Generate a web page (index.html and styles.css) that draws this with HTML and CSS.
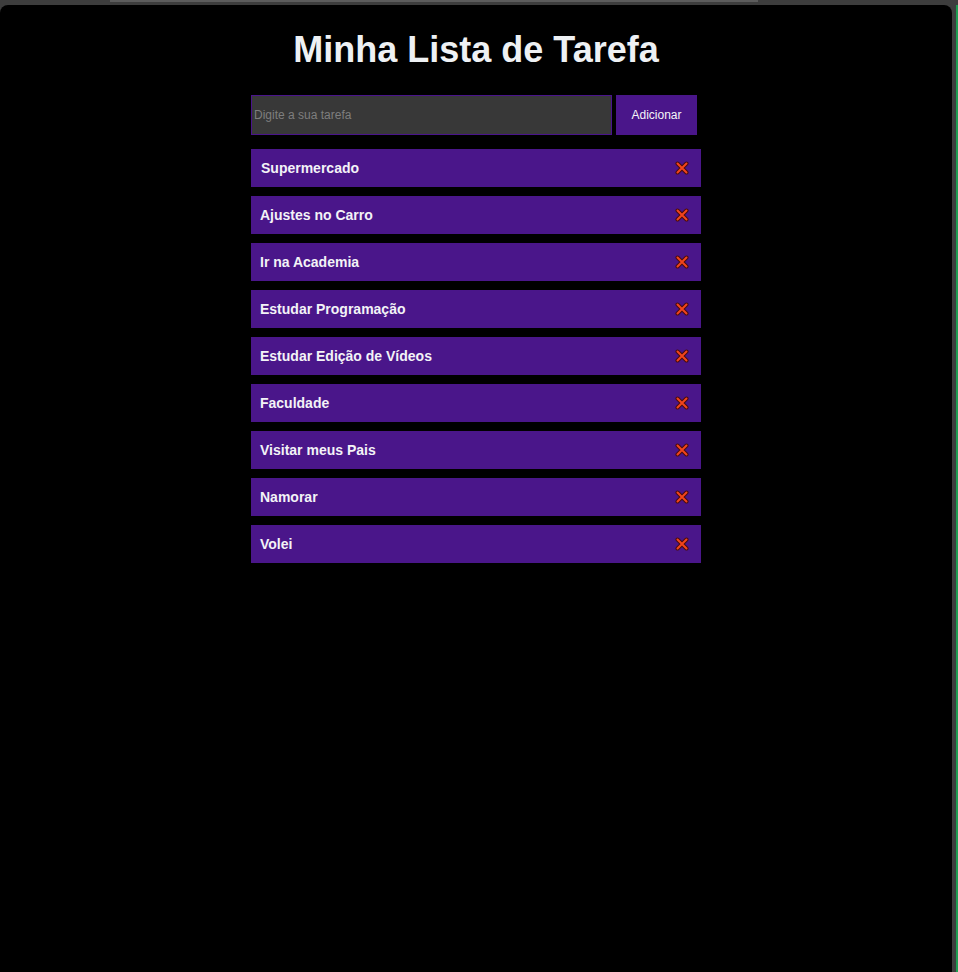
FILE: index.html
```html
<!DOCTYPE html>
<html lang="pt-BR">
<head>
<meta charset="utf-8">
<title>Minha Lista de Tarefa</title>
<link rel="stylesheet" href="styles.css">
</head>
<body>
<div class="chrome"><div class="chrome-bar"></div></div>
<div class="window">
  <main class="panel">
    <h1 class="title">Minha Lista de Tarefa</h1>
    <div class="todo">
      <form class="add-form">
        <input class="task-input" type="text" placeholder="Digite a sua tarefa">
        <button class="add-btn" type="button">Adicionar</button>
      </form>
      <ul class="task-list">
        <li class="task"><span class="task-name">Supermercado</span><span class="del"><svg viewBox="0 0 14 14" width="14" height="14"><path d="M2.5 2.5L11.5 11.5M11.5 2.5L2.5 11.5" stroke="#4a0c0c" stroke-width="4" stroke-linecap="round"/><path d="M2.5 2.5L11.5 11.5M11.5 2.5L2.5 11.5" stroke="#f2451c" stroke-width="2" stroke-linecap="round"/></svg></span></li>
        <li class="task"><span class="task-name">Ajustes no Carro</span><span class="del"><svg viewBox="0 0 14 14" width="14" height="14"><path d="M2.5 2.5L11.5 11.5M11.5 2.5L2.5 11.5" stroke="#4a0c0c" stroke-width="4" stroke-linecap="round"/><path d="M2.5 2.5L11.5 11.5M11.5 2.5L2.5 11.5" stroke="#f2451c" stroke-width="2" stroke-linecap="round"/></svg></span></li>
        <li class="task"><span class="task-name">Ir na Academia</span><span class="del"><svg viewBox="0 0 14 14" width="14" height="14"><path d="M2.5 2.5L11.5 11.5M11.5 2.5L2.5 11.5" stroke="#4a0c0c" stroke-width="4" stroke-linecap="round"/><path d="M2.5 2.5L11.5 11.5M11.5 2.5L2.5 11.5" stroke="#f2451c" stroke-width="2" stroke-linecap="round"/></svg></span></li>
        <li class="task"><span class="task-name">Estudar Programação</span><span class="del"><svg viewBox="0 0 14 14" width="14" height="14"><path d="M2.5 2.5L11.5 11.5M11.5 2.5L2.5 11.5" stroke="#4a0c0c" stroke-width="4" stroke-linecap="round"/><path d="M2.5 2.5L11.5 11.5M11.5 2.5L2.5 11.5" stroke="#f2451c" stroke-width="2" stroke-linecap="round"/></svg></span></li>
        <li class="task"><span class="task-name">Estudar Edição de Vídeos</span><span class="del"><svg viewBox="0 0 14 14" width="14" height="14"><path d="M2.5 2.5L11.5 11.5M11.5 2.5L2.5 11.5" stroke="#4a0c0c" stroke-width="4" stroke-linecap="round"/><path d="M2.5 2.5L11.5 11.5M11.5 2.5L2.5 11.5" stroke="#f2451c" stroke-width="2" stroke-linecap="round"/></svg></span></li>
        <li class="task"><span class="task-name">Faculdade</span><span class="del"><svg viewBox="0 0 14 14" width="14" height="14"><path d="M2.5 2.5L11.5 11.5M11.5 2.5L2.5 11.5" stroke="#4a0c0c" stroke-width="4" stroke-linecap="round"/><path d="M2.5 2.5L11.5 11.5M11.5 2.5L2.5 11.5" stroke="#f2451c" stroke-width="2" stroke-linecap="round"/></svg></span></li>
        <li class="task"><span class="task-name">Visitar meus Pais</span><span class="del"><svg viewBox="0 0 14 14" width="14" height="14"><path d="M2.5 2.5L11.5 11.5M11.5 2.5L2.5 11.5" stroke="#4a0c0c" stroke-width="4" stroke-linecap="round"/><path d="M2.5 2.5L11.5 11.5M11.5 2.5L2.5 11.5" stroke="#f2451c" stroke-width="2" stroke-linecap="round"/></svg></span></li>
        <li class="task"><span class="task-name">Namorar</span><span class="del"><svg viewBox="0 0 14 14" width="14" height="14"><path d="M2.5 2.5L11.5 11.5M11.5 2.5L2.5 11.5" stroke="#4a0c0c" stroke-width="4" stroke-linecap="round"/><path d="M2.5 2.5L11.5 11.5M11.5 2.5L2.5 11.5" stroke="#f2451c" stroke-width="2" stroke-linecap="round"/></svg></span></li>
        <li class="task"><span class="task-name">Volei</span><span class="del"><svg viewBox="0 0 14 14" width="14" height="14"><path d="M2.5 2.5L11.5 11.5M11.5 2.5L2.5 11.5" stroke="#4a0c0c" stroke-width="4" stroke-linecap="round"/><path d="M2.5 2.5L11.5 11.5M11.5 2.5L2.5 11.5" stroke="#f2451c" stroke-width="2" stroke-linecap="round"/></svg></span></li>
      </ul>
    </div>
  </main>
  <div class="edge"></div>
  <div class="green"></div>
</div>
</body>
</html>
```
FILE: styles.css
```css
* { box-sizing: border-box; }
html, body {
  margin: 0;
  height: 100%;
  overflow: hidden;
}
body {
  background: #3d3d3d;
  font-family: "Liberation Sans", Arial, sans-serif;
}
.chrome {
  height: 5px;
  padding-left: 110px;
}
.chrome-bar {
  width: 648px;
  height: 2px;
  background: #5c5c5c;
}
.window {
  display: flex;
  height: 967px;
}
.panel {
  flex: 0 0 952px;
  background: #000;
  border-radius: 8px 8px 0 0;
  display: flex;
  flex-direction: column;
  align-items: center;
}
.edge {
  flex: 0 0 4px;
}
.green {
  flex: 0 0 2px;
  background: #1e9e52;
}
.title {
  margin: 24px 0 24px;
  font-size: 36px;
  font-weight: bold;
  color: #eef1f4;
  line-height: normal;
}
.todo {
  width: 450px;
}
.add-form {
  display: flex;
  gap: 4px;
  margin: 0 0 14px;
}
.task-input {
  width: 361px;
  height: 40px;
  margin: 0;
  padding: 1px 2px;
  background: #383838;
  border: 1px solid #4a148c;
  color: #ddd;
  font-family: "Liberation Sans", Arial, sans-serif;
  font-size: 12px;
  outline: none;
}
.task-input::placeholder {
  color: #7e7e7e;
}
.add-btn {
  width: 81px;
  height: 40px;
  margin: 0;
  padding: 0;
  border: none;
  background: #4a168a;
  color: #f4f4f8;
  font-family: "Liberation Sans", Arial, sans-serif;
  font-size: 12px;
}
.task-list {
  list-style: none;
  margin: 0;
  padding: 0;
}
.task {
  display: flex;
  align-items: center;
  justify-content: space-between;
  height: 38px;
  margin-bottom: 9px;
  padding: 0 12px 0 9px;
  background: #4a168a;
  color: #f3f3f7;
  font-size: 14px;
  font-weight: bold;
}
.task:first-child .task-name {
  padding-left: 1px;
}
.del {
  display: flex;
  width: 14px;
  height: 14px;
}
```
